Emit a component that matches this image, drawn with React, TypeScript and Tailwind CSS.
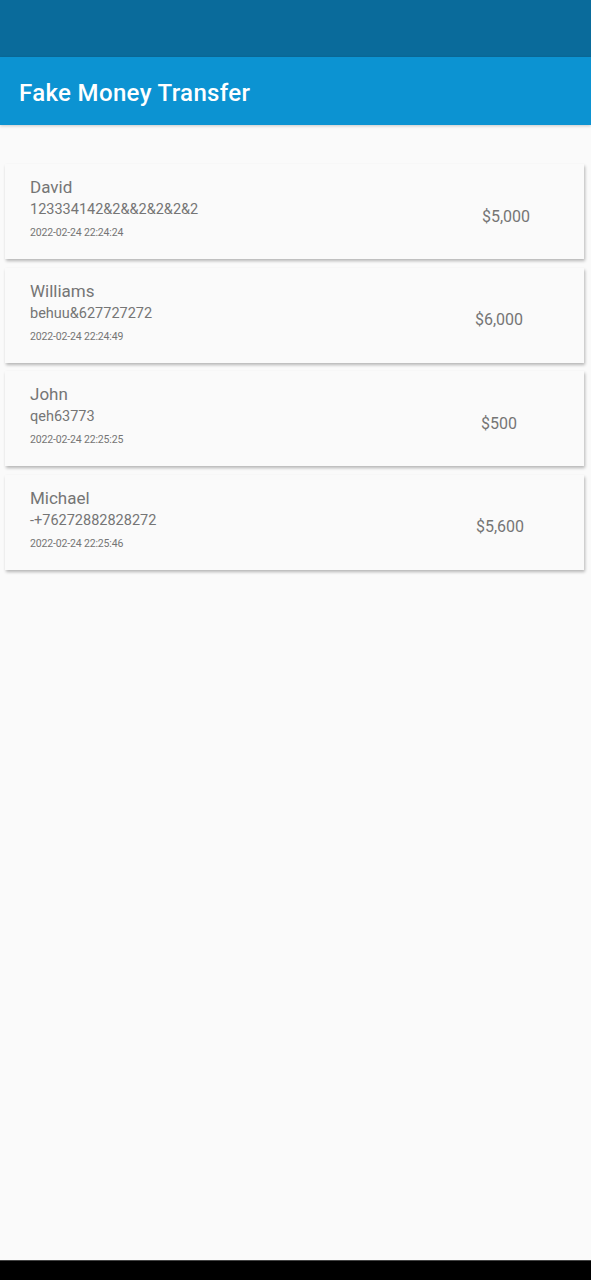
import React from "react";

const rows = [
  { name: "David", sub: "123334142&2&&2&2&2&2", date: "2022-02-24 22:24:24", amt: "$5,000", pr: "pr-[54px]" },
  { name: "Williams", sub: "behuu&627727272", date: "2022-02-24 22:24:49", amt: "$6,000", pr: "pr-[61px]" },
  { name: "John", sub: "qeh63773", date: "2022-02-24 22:25:25", amt: "$500", pr: "pr-[67px]" },
  { name: "Michael", sub: "-+76272882828272", date: "2022-02-24 22:25:46", amt: "$5,600", pr: "pr-[60px]" },
];

export default function App() {
  return (
    <div className="w-[591px] h-[1280px] flex flex-col bg-[#fafafa]" style={{ fontFamily: "Roboto, 'Noto Sans', sans-serif" }}>
      <div className="h-[57px] bg-[#0a6b9b] shrink-0" />
      <div className="h-[68px] bg-[#0c93d2] flex items-center pl-[19px] pt-[3px] shrink-0 shadow-[0_1px_3px_rgba(0,0,0,0.2)]">
        <span className="text-white text-[24px] font-medium tracking-[0.35px]">Fake Money Transfer</span>
      </div>
      <div className="flex-1 flex flex-col gap-[8.5px] pt-[39px] pl-[5px] pr-[7px]">
        {rows.map((r) => (
          <div key={r.name} className="h-[95px] bg-[#fafafa] shadow-[1px_2px_3px_rgba(0,0,0,0.28)] flex items-stretch justify-between pl-[25px]">
            <div className="flex flex-col text-[#757575] pt-[12px]">
              <span className="text-[17px] leading-[23px]">{r.name}</span>
              <span className="text-[14.5px] leading-[22px]">{r.sub}</span>
              <span className="text-[10.5px] leading-[16px] mt-[4px] tracking-[-0.15px]">{r.date}</span>
            </div>
            <span className={`self-center text-[16px] text-[#757575] pt-[10px] ${r.pr}`}>{r.amt}</span>
          </div>
        ))}
      </div>
      <div className="h-[20px] bg-black shrink-0 border-t border-[#444]" />
    </div>
  );
}
